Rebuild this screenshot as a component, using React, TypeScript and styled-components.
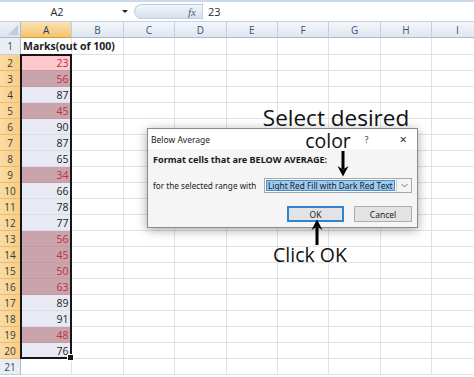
import React from 'react';
import styled, { createGlobalStyle, css } from 'styled-components';

const GlobalStyle = createGlobalStyle`
  html, body {
    margin: 0;
    padding: 0;
    background: #ffffff;
    overflow: hidden;
  }
  body {
    font-family: 'Open Sans', 'Noto Sans', sans-serif;
  }
`;

const columns = ['A', 'B', 'C', 'D', 'E', 'F', 'G', 'H', 'I'];

const marks = [23, 56, 87, 45, 90, 87, 65, 34, 66, 78, 77, 56, 45, 50, 63, 89, 91, 48, 76];
const belowValues = new Set([23, 56, 45, 34, 50, 63, 48]);

type Fill = 'none' | 'active' | 'low' | 'plain';

const Page = styled.div`
  position: relative;
  width: 474px;
  height: 377px;
  overflow: hidden;
  background: #ffffff;
`;

const FormulaBar = styled.div`
  display: flex;
  align-items: center;
  height: 22px;
  box-sizing: border-box;
  border-top: 2px solid #c9d8ec;
  border-bottom: 1px solid #c5d2e3;
  background: #ffffff;
  font-size: 11px;
  color: #1e2a38;
`;

const NameBox = styled.div`
  width: 114px;
  text-align: center;
  padding-right: 8px;
`;

const NameArrow = styled.span`
  width: 0;
  height: 0;
  margin-right: 6px;
  border-left: 3px solid transparent;
  border-right: 3px solid transparent;
  border-top: 3px solid #222;
`;

const Pill = styled.div`
  display: flex;
  align-items: center;
  justify-content: flex-end;
  width: 68px;
  height: 15px;
  padding-right: 6px;
  box-sizing: border-box;
  border-radius: 8px 0 0 8px;
  background: linear-gradient(#f2f6fb, #d6e1ee);
  border: 1px solid #bfcee1;
  border-right: none;
`;

const Fx = styled.span`
  font-family: 'Liberation Serif', serif;
  font-style: italic;
  font-size: 11px;
  color: #59626e;
`;

const FormulaValue = styled.div`
  flex: 1;
  height: 17px;
  line-height: 17px;
  padding-left: 5px;
  border-left: 1px solid #c5d2e3;
`;

const Sheet = styled.div`
  display: grid;
  grid-template-columns: 21px repeat(9, 51.4px);
  grid-template-rows: 16px 17px repeat(20, 16px);
  font-size: 10.5px;
  color: #1c1c1c;
`;

/* every grid item is placed at its own row and column */
const Placed = styled.div<{ $row: number; $col: number }>`
  grid-row: ${({ $row }) => $row};
  grid-column: ${({ $col }) => $col};
`;

const Corner = styled(Placed)`
  position: relative;
  background: linear-gradient(#edf1f7, #dbe3ee);
  border-right: 1px solid #a9bbd1;
  border-bottom: 1px solid #a9bbd1;

  &::after {
    content: '';
    position: absolute;
    right: 2px;
    bottom: 2px;
    border-left: 10px solid transparent;
    border-bottom: 10px solid #c3ccd8;
  }
`;

const ColHeader = styled(Placed)<{ $active?: boolean }>`
  display: flex;
  align-items: center;
  justify-content: center;
  box-sizing: border-box;
  border-right: 1px solid #c3cfdd;
  border-bottom: 1px solid #a9bbd1;
  background: linear-gradient(#f4f7fb, #dfe6f0);
  color: #3d506a;
  font-size: 10px;

  ${({ $active }) =>
    $active &&
    css`
      background: linear-gradient(#fbe2b1, #f4c46f);
      border-bottom-color: #d79c3a;
      color: #2d3a4d;
    `}
`;

const RowHeader = styled(Placed)<{ $active?: boolean }>`
  display: flex;
  align-items: center;
  justify-content: center;
  box-sizing: border-box;
  border-right: 1px solid #a9bbd1;
  border-bottom: 1px solid #c3cfdd;
  background: #e9eef5;
  color: #34496a;
  font-size: 10px;

  ${({ $active }) =>
    $active &&
    css`
      background: linear-gradient(90deg, #fbdca3, #f6cd84);
      border-right-color: #d79c3a;
      border-bottom-color: #e8bd73;
      color: #3a3a3a;
    `}
`;

const fills: Record<Fill, string> = {
  none: '#ffffff',
  active: '#ffc7ce',
  low: '#c9a4ad',
  plain: '#e7eaf3',
};

const Cell = styled(Placed)<{ $fill?: Fill; $low?: boolean }>`
  display: flex;
  align-items: center;
  justify-content: flex-end;
  padding-right: 3px;
  box-sizing: border-box;
  border-right: 1px solid #dde2ea;
  border-bottom: 1px solid #dde2ea;
  background: ${({ $fill = 'none' }) => fills[$fill]};
  color: ${({ $low }) => ($low ? '#c0303f' : '#1c1c1c')};
  white-space: nowrap;

  ${({ $fill }) =>
    $fill &&
    $fill !== 'none' &&
    css`
      border-bottom-color: ${$fill === 'plain' ? '#d8dde8' : '#c39aa5'};
    `}
`;

const TitleCell = styled(Cell)`
  justify-content: flex-start;
  padding-left: 2px;
  overflow: visible;
  font-weight: 700;
  z-index: 1;
`;

const SelectionFrame = styled.div`
  grid-column: 2;
  grid-row: 3 / span 19;
  position: relative;
  border: 2px solid #161616;
  margin: -1px 0 0 -1px;
  pointer-events: none;
  z-index: 2;

  &::after {
    content: '';
    position: absolute;
    right: -4px;
    bottom: -4px;
    width: 5px;
    height: 5px;
    background: #161616;
    border: 1px solid #ffffff;
  }
`;

/* dialog */

const Dialog = styled.div`
  position: absolute;
  left: 147px;
  top: 128px;
  width: 271px;
  height: 100px;
  box-sizing: border-box;
  border: 1px solid #8b8b8b;
  background: #f5f5f5;
  box-shadow: 0 2px 10px rgba(0, 0, 0, 0.35);
  font-family: 'Noto Sans', 'Open Sans', sans-serif;
  color: #1a1a1a;
  display: flex;
  flex-direction: column;
  z-index: 4;
`;

const TitleBar = styled.div`
  display: flex;
  align-items: center;
  height: 20px;
  padding: 0 10px 0 3px;
  background: #ffffff;
  font-size: 8.5px;
`;

const TitleText = styled.span`
  flex: 1;
`;

const TitleIcon = styled.span<{ $big?: boolean }>`
  margin-left: ${({ $big }) => ($big ? '31px' : '0')};
  font-size: ${({ $big }) => ($big ? '13px' : '8.5px')};
  color: #333;
`;

const DialogBody = styled.div`
  display: flex;
  flex-direction: column;
  padding: 4px 5px 0 5px;
  font-size: 8.2px;
`;

const Heading = styled.div`
  font-weight: 700;
  font-size: 9.1px;
  height: 14px;
  line-height: 14px;
`;

const RangeRow = styled.div`
  display: flex;
  align-items: center;
  justify-content: space-between;
  margin-top: 11px;
`;

const Select = styled.div`
  display: flex;
  align-items: stretch;
  width: 148px;
  height: 15px;
  box-sizing: border-box;
  border: 1px solid #a8a8a8;
  background: #ffffff;
`;

const SelectValue = styled.div`
  flex: 1;
  margin: 1px;
  padding-left: 1px;
  display: flex;
  align-items: center;
  background: #9ccbf1;
  border: 1px solid #4f8ccc;
  font-size: 8.3px;
  white-space: nowrap;
  overflow: hidden;
`;

const Chevron = styled.div`
  width: 14px;
  display: flex;
  align-items: center;
  justify-content: center;
  border-left: 1px solid #d0d0d0;
  background: #f4f4f4;
`;

const Buttons = styled.div`
  display: flex;
  justify-content: flex-end;
  gap: 10px;
  margin-top: 13px;
`;

const Button = styled.div<{ $primary?: boolean }>`
  display: flex;
  align-items: center;
  justify-content: center;
  width: ${({ $primary }) => ($primary ? '57px' : '58px')};
  height: 16px;
  box-sizing: border-box;
  background: #e3e3e3;
  border: 1px solid #adadad;
  font-size: 8.5px;

  ${({ $primary }) =>
    $primary &&
    css`
      border: 2px solid #2f83d3;
    `}
`;

/* annotations */

const Note = styled.div<{ $left: number; $top: number; $width: number }>`
  position: absolute;
  left: ${({ $left }) => $left}px;
  top: ${({ $top }) => $top}px;
  width: ${({ $width }) => $width}px;
  display: flex;
  flex-direction: column;
  align-items: center;
  font-family: 'Open Sans', 'Noto Sans', sans-serif;
  color: #111111;
  z-index: 5;
`;

const NoteLine = styled.span<{ $shift?: number; $size?: number }>`
  white-space: nowrap;
  height: 23px;
  line-height: 23px;
  margin-right: ${({ $shift = 0 }) => $shift}px;
  font-size: ${({ $size = 19.5 }) => $size}px;
`;

const ArrowMark = styled.svg<{ $left: number; $top: number }>`
  position: absolute;
  left: ${({ $left }) => $left}px;
  top: ${({ $top }) => $top}px;
  z-index: 5;
`;

const Arrow = ({ left, top, up = false }: { left: number; top: number; up?: boolean }) => (
  <ArrowMark $left={left} $top={top} width="12" height="26" viewBox="0 0 12 26">
    <g transform={up ? 'rotate(180 6 13)' : undefined}>
      <path d="M6 0 V18" stroke="#000" strokeWidth="3" />
      <path d="M0.5 15 L6 25.5 L11.5 15 L6 18.5 Z" fill="#000" />
    </g>
  </ArrowMark>
);

export default function App() {
  const rest = columns.slice(1);

  return (
    <Page>
      <GlobalStyle />
      <FormulaBar>
        <NameBox>A2</NameBox>
        <NameArrow />
        <Pill>
          <Fx>fx</Fx>
        </Pill>
        <FormulaValue>23</FormulaValue>
      </FormulaBar>

      <Sheet>
        <Corner $row={1} $col={1} />
        {columns.map((c, ci) => (
          <ColHeader key={c} $row={1} $col={ci + 2} $active={c === 'A'}>
            {c}
          </ColHeader>
        ))}

        <RowHeader $row={2} $col={1}>
          1
        </RowHeader>
        <TitleCell $row={2} $col={2}>
          Marks(out of 100)
        </TitleCell>
        {rest.map((c, ci) => (
          <Cell key={c} $row={2} $col={ci + 3} />
        ))}

        {marks.map((m, i) => {
          const row = i + 3;
          const low = belowValues.has(m);
          const fill: Fill = i === 0 ? 'active' : low ? 'low' : 'plain';
          return (
            <React.Fragment key={i}>
              <RowHeader $row={row} $col={1} $active>
                {i + 2}
              </RowHeader>
              <Cell $row={row} $col={2} $fill={fill} $low={low}>
                {m}
              </Cell>
              {rest.map((c, ci) => (
                <Cell key={c} $row={row} $col={ci + 3} />
              ))}
            </React.Fragment>
          );
        })}

        <RowHeader $row={22} $col={1}>
          21
        </RowHeader>
        {columns.map((c, ci) => (
          <Cell key={c} $row={22} $col={ci + 2} />
        ))}

        <SelectionFrame />
      </Sheet>

      <Dialog>
        <TitleBar>
          <TitleText>Below Average</TitleText>
          <TitleIcon>?</TitleIcon>
          <TitleIcon $big>×</TitleIcon>
        </TitleBar>
        <DialogBody>
          <Heading>Format cells that are BELOW AVERAGE:</Heading>
          <RangeRow>
            <span>for the selected range with</span>
            <Select>
              <SelectValue>Light Red Fill with Dark Red Text</SelectValue>
              <Chevron>
                <svg width="7" height="5" viewBox="0 0 7 5">
                  <path d="M0.5 1 L3.5 4 L6.5 1" fill="none" stroke="#666" strokeWidth="0.9" />
                </svg>
              </Chevron>
            </Select>
          </RangeRow>
          <Buttons>
            <Button $primary>OK</Button>
            <Button>Cancel</Button>
          </Buttons>
        </DialogBody>
      </Dialog>

      <Note $left={256} $top={106} $width={160}>
        <NoteLine $size={22.5}>Select desired</NoteLine>
        <NoteLine $shift={16}>color</NoteLine>
      </Note>
      <Arrow left={337} top={151} />

      <Note $left={260} $top={243} $width={100}>
        <NoteLine>Click OK</NoteLine>
      </Note>
      <Arrow left={311} top={219} up />
    </Page>
  );
}
